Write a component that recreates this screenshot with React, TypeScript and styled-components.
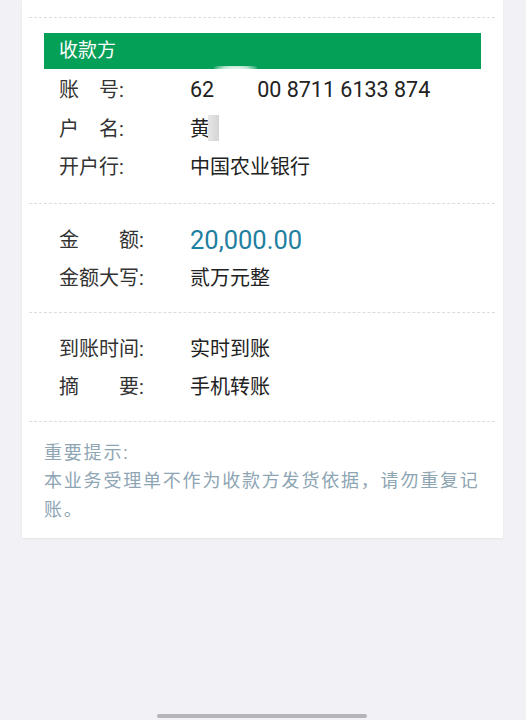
import React from "react";
import styled, { createGlobalStyle } from "styled-components";

type Field = { label: string; value: React.ReactNode; wide?: boolean; kind?: "amount" | "digits" };

function Rows({ items }: { items: Field[] }) {
  return (
    <>
      {items.map((f) => (
        <Row key={f.label}>
          <LabelCell>
            <LabelText $wide={f.wide}>{f.label}</LabelText>:
          </LabelCell>
          <Value $kind={f.kind}>{f.value}</Value>
        </Row>
      ))}
    </>
  );
}

export default function App() {
  const payee: Field[] = [
    {
      label: "账号",
      kind: "digits",
      value: (
        <>
          62<AccountMask />00 8711 6133 874
        </>
      ),
    },
    {
      label: "户名",
      value: (
        <>
          黄<NameMask />
        </>
      ),
    },
    { label: "开户行", value: "中国农业银行" },
  ];

  const money: Field[] = [
    { label: "金额", value: "20,000.00", wide: true, kind: "amount" },
    { label: "金额大写", value: "贰万元整", wide: true },
  ];

  const extra: Field[] = [
    { label: "到账时间", value: "实时到账", wide: true },
    { label: "摘要", value: "手机转账", wide: true },
  ];

  return (
    <Page>
      <GlobalStyle />
      <Card>
        <Divider />
        <Section $top={15} $bottom={16}>
          <Header>收款方</Header>
          <Rows items={payee} />
        </Section>
        <Divider />
        <Section $top={17} $bottom={14}>
          <Rows items={money} />
        </Section>
        <Divider />
        <Section $top={17} $bottom={14}>
          <Rows items={extra} />
        </Section>
        <Divider />
        <Tips>
          <p>重要提示:</p>
          <p>本业务受理单不作为收款方发货依据，请勿重复记账。</p>
        </Tips>
      </Card>
      <HomeBar />
    </Page>
  );
}

// --- Styles ---

const GlobalStyle = createGlobalStyle`
  html, body {
    margin: 0;
    padding: 0;
    background: #f2f1f6;
  }
  * { box-sizing: border-box; }
`;

const Page = styled.div`
  min-height: 100vh;
  background: #f2f1f6;
  padding: 0 23px 0 22px;
  font-family: Roboto, "Noto Sans CJK SC", sans-serif;
`;

const Card = styled.div`
  background: #fff;
  padding-top: 17px;
  box-shadow: 0 1px 2px rgba(0, 0, 0, 0.06);
`;

const Divider = styled.div`
  margin: 0 8px 0 7px;
  border-top: 1px dashed #dcdcdc;
`;

const Section = styled.div<{ $top: number; $bottom: number }>`
  padding: ${(p) => p.$top}px 22px ${(p) => p.$bottom}px;
`;

const Header = styled.div`
  height: 36px;
  background: #05a058;
  color: #fff;
  font-size: 19px;
  line-height: 36px;
  padding-left: 15px;
  margin-bottom: 2px;
`;

const Row = styled.div`
  display: flex;
  align-items: center;
  height: 38.5px;
  line-height: 38px;
  padding-left: 15px;
  font-size: 20px;
`;

const LabelCell = styled.div`
  flex: 0 0 131px;
  display: flex;
  align-items: center;
  color: #333;
  white-space: nowrap;
`;

const LabelText = styled.span<{ $wide?: boolean }>`
  display: inline-block;
  width: ${(p) => (p.$wide ? 80 : 60)}px;
  text-align: justify;
  text-align-last: justify;
`;

const Value = styled.div<{ $kind?: "amount" | "digits" }>`
  display: flex;
  align-items: center;
  color: ${(p) => (p.$kind === "amount" ? "#1f7fa0" : "#222")};
  font-size: ${(p) => (p.$kind === "amount" ? 25.5 : p.$kind === "digits" ? 21.5 : 20)}px;
  white-space: pre;
`;

const AccountMask = styled.span`
  display: inline-block;
  width: 43px;
  height: 40px;
  margin-top: -8px;
  background: radial-gradient(ellipse at center, #fff 55%, rgba(255, 255, 255, 0.7) 75%, rgba(255, 255, 255, 0) 100%);
`;

const NameMask = styled.span`
  display: inline-block;
  width: 11px;
  height: 26px;
  margin-left: -2px;
  margin-top: -2px;
  background: linear-gradient(to right, rgba(228, 228, 228, 0.9), #d4d4d4);
`;

const Tips = styled.div`
  padding: 17px 22px 14px;
  color: #8ea5b4;
  font-size: 18px;
  letter-spacing: 1.8px;
  line-height: 28.5px;

  p {
    margin: 0;
  }
`;

const HomeBar = styled.div`
  position: fixed;
  left: 157px;
  bottom: 2px;
  width: 210px;
  height: 4px;
  border-radius: 2px;
  background: #b4b4b9;
`;
